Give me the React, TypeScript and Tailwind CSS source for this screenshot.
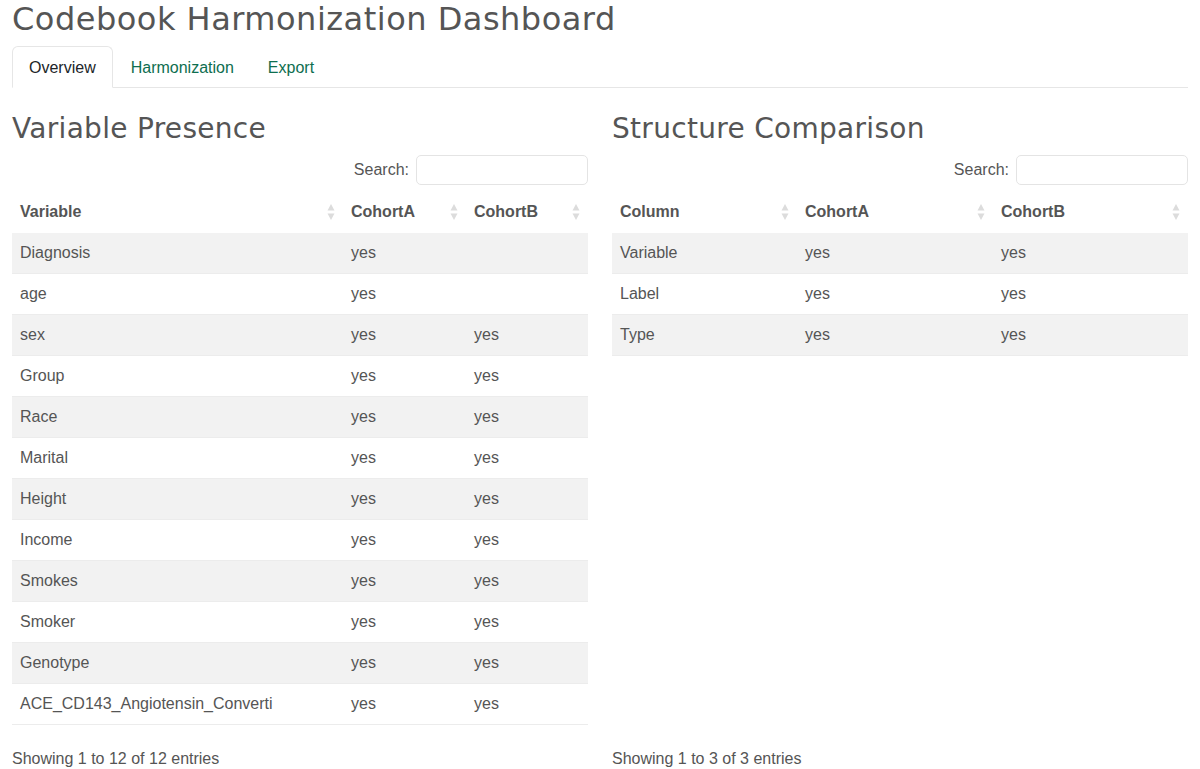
import React from 'react';

const HEAD_FONT = { fontFamily: '"DejaVu Sans", "Open Sans", sans-serif' };

const PRESENCE = [
  ['Diagnosis', 'yes', ''],
  ['age', 'yes', ''],
  ['sex', 'yes', 'yes'],
  ['Group', 'yes', 'yes'],
  ['Race', 'yes', 'yes'],
  ['Marital', 'yes', 'yes'],
  ['Height', 'yes', 'yes'],
  ['Income', 'yes', 'yes'],
  ['Smokes', 'yes', 'yes'],
  ['Smoker', 'yes', 'yes'],
  ['Genotype', 'yes', 'yes'],
  ['ACE_CD143_Angiotensin_Converti', 'yes', 'yes'],
];

const STRUCTURE = [
  ['Variable', 'yes', 'yes'],
  ['Label', 'yes', 'yes'],
  ['Type', 'yes', 'yes'],
];

function SortIcon() {
  return (
    <svg width="8" height="18" viewBox="0 0 8 18" className="shrink-0">
      <path d="M4 1 L7.5 7.5 L0.5 7.5 Z" fill="#dcdcdc" />
      <path d="M4 17 L7.5 10.5 L0.5 10.5 Z" fill="#dcdcdc" />
    </svg>
  );
}

function DataTable({
  title,
  columns,
  widths,
  rows,
  footer,
}: {
  title: string;
  columns: string[];
  widths: string[];
  rows: string[][];
  footer: string;
}) {
  return (
    <div className="flex-1 min-w-0 flex flex-col">
      <h3 className="text-[28px] leading-[1.2] text-[#555] mt-[24px] mb-[9px] tracking-[0.3px]" style={HEAD_FONT}>
        {title}
      </h3>
      <div className="flex justify-end items-center gap-[7px] h-[30px] mb-[7px]">
        <span>Search:</span>
        <input className="w-[172px] h-[30px] border border-[#e4e4e4] rounded-[5px] bg-white outline-none" />
      </div>
      <table className="w-full border-collapse table-fixed">
        <colgroup>
          {widths.map((w, i) => (
            <col key={i} className={w} />
          ))}
        </colgroup>
        <thead>
          <tr className="h-[41px]">
            {columns.map((c) => (
              <th key={c} className="px-[8px] text-left font-bold">
                <div className="flex items-center justify-between">
                  <span>{c}</span>
                  <SortIcon />
                </div>
              </th>
            ))}
          </tr>
        </thead>
        <tbody>
          {rows.map((r, i) => (
            <tr key={i} className={`h-[41px] border-b border-[#ececec] ${i % 2 === 0 ? 'bg-[#f2f2f2]' : 'bg-white'}`}>
              {r.map((cell, j) => (
                <td key={j} className="px-[8px] whitespace-nowrap overflow-hidden">
                  {cell}
                </td>
              ))}
            </tr>
          ))}
        </tbody>
      </table>
      <div className="mt-auto pt-[22px] leading-[24px]">{footer}</div>
    </div>
  );
}

export default function App() {
  return (
    <div
      className="w-[1200px] h-[769px] overflow-hidden bg-white px-[12px] text-[16px] leading-[24px] text-[#555]"
      style={{ fontFamily: '"Liberation Sans", Arial, sans-serif' }}
    >
      <h2 className="text-[32px] leading-[38px] text-[#555] mb-[8px] tracking-[0.5px]" style={HEAD_FONT}>
        Codebook Harmonization Dashboard
      </h2>
      <div className="flex border-b border-[#e6e6e6] h-[42px]">
        <div className="px-[16px] h-[42px] pt-[1px] flex items-center border border-[#e6e6e6] border-b-white rounded-t-[6px] text-[#212529] bg-white -mb-px">
          Overview
        </div>
        <div className="px-[18px] h-[42px] pt-[1px] flex items-center text-[#0e6e4f]">Harmonization</div>
        <div className="px-[16px] h-[42px] pt-[1px] flex items-center text-[#0e6e4f]">Export</div>
      </div>
      <div className="flex gap-[24px]">
        <DataTable
          title="Variable Presence"
          columns={['Variable', 'CohortA', 'CohortB']}
          widths={['w-[331px]', 'w-[123px]', 'w-[122px]']}
          rows={PRESENCE}
          footer="Showing 1 to 12 of 12 entries"
        />
        <DataTable
          title="Structure Comparison"
          columns={['Column', 'CohortA', 'CohortB']}
          widths={['w-[185px]', 'w-[196px]', 'w-[195px]']}
          rows={STRUCTURE}
          footer="Showing 1 to 3 of 3 entries"
        />
      </div>
    </div>
  );
}
